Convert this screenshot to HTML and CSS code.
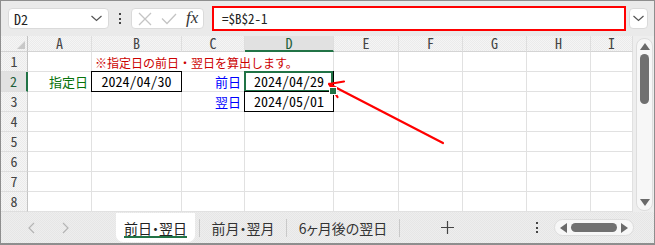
FILE: index.html
```html
<!DOCTYPE html>
<html lang="ja">
<head>
    <meta charset="UTF-8">
    <title>前日・翌日</title>
    <link rel="stylesheet" href="styles.css">
</head>
<body>
<div class="app">
    <div class="toolbar">
        <div class="namebox">
            <span>D2</span>
            <svg width="11" height="7" viewBox="0 0 11 7"><polyline points="0.5,1 5.5,5.5 10.5,1" fill="none" stroke="#555" stroke-width="1.2"/></svg>
        </div>
        <div class="kebab"><i></i><i></i><i></i></div>
        <div class="fxbox">
            <svg width="14" height="14" viewBox="0 0 14 14"><path d="M1 1 L13 13 M13 1 L1 13" stroke="#c4c4c4" stroke-width="1.3"/></svg>
            <svg width="16" height="12" viewBox="0 0 16 12"><polyline points="1,5.5 6,10.5 15,1" fill="none" stroke="#c4c4c4" stroke-width="1.3"/></svg>
            <span class="fx">fx</span>
        </div>
        <div class="formula">=$B$2-1</div>
        <div class="expand">
            <svg width="11" height="7" viewBox="0 0 11 7"><polyline points="0.5,1 5.5,5.5 10.5,1" fill="none" stroke="#555" stroke-width="1.2"/></svg>
        </div>
    </div>

    <div class="sheet">
        <div class="grid">
            <div class="corner"><svg width="8" height="8" viewBox="0 0 8 8"><polygon points="8,0 8,8 0,8" fill="#c8c8c8"/></svg></div>
            <div class="ch">A</div><div class="ch">B</div><div class="ch">C</div>
            <div class="ch active">D</div>
            <div class="ch">E</div><div class="ch">F</div><div class="ch">G</div><div class="ch">H</div><div class="ch">I</div>

            <div class="rh">1</div>
            <div class="c"></div>
            <div class="c note">※指定日の前日・翌日を算出します。</div>
            <div class="c"></div><div class="c"></div><div class="c"></div><div class="c"></div><div class="c"></div>

            <div class="rh active">2</div>
            <div class="c label green">指定日</div>
            <div class="c date boxed">2024/04/30</div>
            <div class="c label blue">前日</div>
            <div class="c date boxed selected">2024/04/29</div>
            <div class="c"></div><div class="c"></div><div class="c"></div><div class="c"></div><div class="c"></div>

            <div class="rh">3</div>
            <div class="c"></div>
            <div class="c"></div>
            <div class="c label blue">翌日</div>
            <div class="c date boxed">2024/05/01</div>
            <div class="c"></div><div class="c"></div><div class="c"></div><div class="c"></div><div class="c"></div>

            <div class="rh">4</div>
            <div class="c"></div><div class="c"></div><div class="c"></div><div class="c"></div><div class="c"></div><div class="c"></div><div class="c"></div><div class="c"></div><div class="c"></div>
            <div class="rh">5</div>
            <div class="c"></div><div class="c"></div><div class="c"></div><div class="c"></div><div class="c"></div><div class="c"></div><div class="c"></div><div class="c"></div><div class="c"></div>
            <div class="rh">6</div>
            <div class="c"></div><div class="c"></div><div class="c"></div><div class="c"></div><div class="c"></div><div class="c"></div><div class="c"></div><div class="c"></div><div class="c"></div>
            <div class="rh">7</div>
            <div class="c"></div><div class="c"></div><div class="c"></div><div class="c"></div><div class="c"></div><div class="c"></div><div class="c"></div><div class="c"></div><div class="c"></div>
            <div class="rh">8</div>
            <div class="c"></div><div class="c"></div><div class="c"></div><div class="c"></div><div class="c"></div><div class="c"></div><div class="c"></div><div class="c"></div><div class="c"></div>
        </div>

        <div class="vscroll">
            <div class="track">
                <svg width="10" height="7" viewBox="0 0 10 7"><polygon points="5,0 10,7 0,7" fill="#6a6a6a"/></svg>
                <div class="thumb"></div>
                <svg class="down" width="10" height="7" viewBox="0 0 10 7"><polygon points="0,0 10,0 5,7" fill="#6a6a6a"/></svg>
            </div>
        </div>
    </div>

    <div class="tabbar">
        <div class="nav">
            <svg width="7" height="12" viewBox="0 0 7 12"><polyline points="6,1 1,6 6,11" fill="none" stroke="#b4b4b4" stroke-width="1.2"/></svg>
            <svg width="7" height="12" viewBox="0 0 7 12"><polyline points="1,1 6,6 1,11" fill="none" stroke="#b4b4b4" stroke-width="1.2"/></svg>
        </div>
        <div class="tab active"><span>前日・翌日</span></div>
        <div class="sep"></div>
        <div class="tab t2"><span>前月・翌月</span></div>
        <div class="sep"></div>
        <div class="tab t3"><span>6ヶ月後の翌日</span></div>
        <div class="sep"></div>
        <div class="add">
            <svg width="13" height="13" viewBox="0 0 13 13"><path d="M6.5 0 V13 M0 6.5 H13" stroke="#444" stroke-width="1.2"/></svg>
        </div>
        <div class="kebab small"><i></i><i></i><i></i></div>
        <div class="hscroll">
            <svg width="7" height="10" viewBox="0 0 7 10"><polygon points="7,0 7,10 0,5" fill="#6a6a6a"/></svg>
            <div class="thumb"></div>
            <svg width="7" height="10" viewBox="0 0 7 10"><polygon points="0,0 7,5 0,10" fill="#6a6a6a"/></svg>
        </div>
    </div>

    <svg class="arrow" width="655" height="245" viewBox="0 0 655 245">
        <path d="M443 143 L329 84 M329 84 L344 81.5 M329 84 L337.5 97" fill="none" stroke="#ff0000" stroke-width="2.2" stroke-linecap="round" stroke-linejoin="round"/>
    </svg>
</div>
</body>
</html>
```

FILE: styles.css
```css
* {
    box-sizing: border-box;
}

body {
    margin: 0;
    font-family: "Noto Sans CJK JP", sans-serif;
    color: #222;
}

.app {
    position: relative;
    width: 655px;
    height: 245px;
    border: 1px solid #8e8e8e;
    border-bottom-width: 2px;
    background: #eaeaea;
    display: flex;
    flex-direction: column;
    overflow: hidden;
}

/* formula bar */

.toolbar {
    height: 35px;
    display: flex;
    align-items: center;
    padding-left: 7px;
}

.namebox {
    width: 101px;
    height: 21px;
    background: #fff;
    border: 1px solid #dadada;
    border-radius: 4px;
    display: flex;
    align-items: center;
    justify-content: space-between;
    padding: 0 6px 0 5px;
    font-size: 14px;
    font-feature-settings: "hwid";
}

.kebab {
    width: 22px;
    display: flex;
    flex-direction: column;
    align-items: center;
    gap: 2.5px;
}

    .kebab i {
        width: 2px;
        height: 2px;
        background: #444;
    }

.fxbox {
    width: 73px;
    height: 21px;
    background: #fff;
    border: 1px solid #dadada;
    border-radius: 4px;
    display: flex;
    align-items: center;
    gap: 9px;
    padding-left: 6px;
}

.fx {
    font-family: "Liberation Serif", serif;
    font-style: italic;
    font-size: 17px;
    line-height: 1;
    color: #333;
    margin-top: -2px;
}

.formula {
    width: 414px;
    height: 25px;
    margin-left: 8px;
    background: #fff;
    border: 2px solid #ff0000;
    font-size: 13px;
    line-height: 21px;
    padding-left: 8px;
    font-feature-settings: "hwid";
}

.expand {
    width: 19px;
    height: 21px;
    margin-left: 3px;
    background: #fff;
    border: 1px solid #dadada;
    border-radius: 4px;
    display: flex;
    align-items: center;
    justify-content: center;
}

/* sheet */

.sheet {
    height: 176px;
    display: flex;
    background: #fff;
}

.grid {
    display: grid;
    grid-template-columns: 27px 64px 90px 63px 89px 65px 64px 64px 64px 42px;
    grid-template-rows: 16px repeat(8, 20px);
}

.corner, .ch, .rh {
    background: repeating-conic-gradient(#ebebeb 0 25%, #f5f5f5 0 50%) 0 0 / 2px 2px;
    color: #444;
    font-size: 14px;
    font-feature-settings: "hwid";
    text-align: center;
}

.corner {
    border-right: 1px solid #c4c4c4;
    border-bottom: 1px solid #d4d4d4;
    display: flex;
    align-items: flex-end;
    justify-content: flex-end;
    padding: 0 2px 2px 0;
}

.ch {
    line-height: 15px;
    border-right: 1px solid #dedede;
    border-bottom: 1px solid #d4d4d4;
}

    .ch.active {
        background: #e1e1e1;
        border-bottom: 2px solid #217346;
        color: #1c5e39;
    }

.rh {
    line-height: 19px;
    border-right: 1px solid #c4c4c4;
    border-bottom: 1px solid #dedede;
}

    .rh.active {
        background: #e1e1e1;
        border-right: 2px solid #217346;
        color: #1c5e39;
    }

.c {
    position: relative;
    border-right: 1px solid #e1e1e1;
    border-bottom: 1px solid #e1e1e1;
    line-height: 19px;
    font-size: 13px;
    padding: 0 3px;
    white-space: nowrap;
}

.note {
    grid-column: span 3;
    color: #cc0000;
    font-size: 12px;
    line-height: 21px;
}

.label {
    text-align: right;
}

.green {
    color: #08730b;
}

.blue {
    color: #0000ff;
}

.date {
    font-size: 14px;
    font-feature-settings: "hwid";
    text-align: center;
    color: #000;
}

.boxed {
    border-right-color: #000;
    border-bottom-color: #000;
    box-shadow: -1px 0 #000, 0 -1px #000, -1px -1px #000;
}

.selected::after {
    content: "";
    position: absolute;
    left: -1px;
    top: -1px;
    right: 0;
    bottom: -1px;
    border: 2px solid #217346;
}

.selected::before {
    content: "";
    position: absolute;
    right: -4px;
    bottom: -4px;
    width: 6px;
    height: 6px;
    background: #217346;
    border: 1px solid #fff;
    z-index: 1;
}

.vscroll {
    flex: 1;
    background: #eeeeee;
    padding: 2px 1px 0 3px;
}

    .vscroll .track {
        height: 173px;
        background: #f7f7f7;
        border: 1px solid #dddddd;
        border-radius: 8px;
        display: flex;
        flex-direction: column;
        align-items: center;
        padding-top: 4px;
    }

    .vscroll .thumb {
        width: 9px;
        height: 50px;
        margin-top: 4px;
        border-radius: 5px;
        background: #707070;
    }

    .vscroll .down {
        margin-top: auto;
        margin-bottom: 4px;
    }

/* sheet tabs */

.tabbar {
    flex: 1;
    display: flex;
    align-items: stretch;
    background: repeating-conic-gradient(#e6e6e6 0 25%, #eeeeee 0 50%) 0 0 / 2px 2px;
}

.nav {
    width: 115px;
    display: flex;
    align-items: center;
    gap: 27px;
    padding-left: 27px;
}

.tab {
    display: flex;
    align-items: center;
    justify-content: center;
    font-size: 14px;
    font-feature-settings: "palt";
    color: #333;
}

    .tab.active {
        width: 79px;
        margin: 1px 4px 1px 0;
        background: #fff;
        border-radius: 0 0 7px 7px;
        position: relative;
        color: #222;
    }

        .tab.active::after {
            content: "";
            position: absolute;
            left: 8px;
            right: 8px;
            bottom: 4px;
            height: 2px;
            background: #217346;
        }

    .tab.t2 {
        width: 86px;
    }

    .tab.t3 {
        width: 112px;
    }

.sep {
    width: 1px;
    height: 18px;
    align-self: center;
    background: #c9c9c9;
}

.add {
    width: 94px;
    display: flex;
    align-items: center;
    justify-content: center;
}

.kebab.small {
    width: 4px;
    margin-left: 41px;
    justify-content: center;
}

.hscroll {
    width: 80px;
    height: 17px;
    align-self: center;
    margin-left: 15px;
    background: #f7f7f7;
    border: 1px solid #dddddd;
    border-radius: 9px;
    display: flex;
    align-items: center;
    justify-content: space-between;
    padding: 0 5px;
}

    .hscroll .thumb {
        width: 46px;
        height: 9px;
        border-radius: 5px;
        background: #707070;
    }

.arrow {
    position: absolute;
    left: -1px;
    top: -1px;
    pointer-events: none;
}
```
